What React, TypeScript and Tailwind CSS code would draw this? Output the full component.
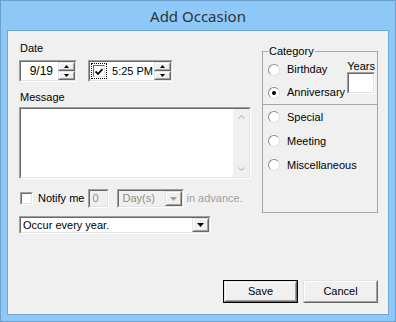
import React from 'react'

const ui = "font-['Liberation_Sans',Arial,sans-serif] text-[11px] leading-[13px] text-black"

function Sunken({ className = '', inner = 'bg-white', children }: { className?: string; inner?: string; children?: React.ReactNode }) {
  return (
    <div className={`shrink-0 border border-t-[#a0a0a0] border-l-[#a0a0a0] border-b-white border-r-white ${className}`}>
      <div className={`w-full h-full border border-t-[#696969] border-l-[#696969] border-b-[#e3e3e3] border-r-[#e3e3e3] flex items-center ${inner}`}>
        {children}
      </div>
    </div>
  )
}

function Raised({ className = '', children }: { className?: string; children?: React.ReactNode }) {
  return (
    <div className={`shrink-0 border border-t-[#e3e3e3] border-l-[#e3e3e3] border-b-[#696969] border-r-[#696969] bg-[#f0f0f0] ${className}`}>
      <div className="w-full h-full border border-t-white border-l-white border-b-[#a0a0a0] border-r-[#a0a0a0] flex items-center justify-center">
        {children}
      </div>
    </div>
  )
}

function Spin() {
  return (
    <div className="flex flex-col w-[17px] h-full">
      <Raised className="flex-1">
        <svg width="5" height="3" viewBox="0 0 5 3"><path d="M2.5 0 L5 3 L0 3 Z" fill="#000" /></svg>
      </Raised>
      <Raised className="flex-1">
        <svg width="5" height="3" viewBox="0 0 5 3"><path d="M0 0 L5 0 L2.5 3 Z" fill="#000" /></svg>
      </Raised>
    </div>
  )
}

function DropArrow({ color = '#000' }: { color?: string }) {
  return (
    <Raised className="w-[17px] h-full">
      <svg width="7" height="4" viewBox="0 0 7 4"><path d="M0 0 L7 0 L3.5 4 Z" fill={color} /></svg>
    </Raised>
  )
}

function Radio({ label, checked = false }: { label: string; checked?: boolean }) {
  return (
    <div className="flex items-center whitespace-nowrap">
      <div className="w-[12px] h-[12px] rounded-full bg-white border border-t-[#8d8d8d] border-l-[#8d8d8d] border-b-[#e0e0e0] border-r-[#e0e0e0] flex items-center justify-center">
        {checked && <div className="w-[4px] h-[4px] rounded-full bg-black" />}
      </div>
      <span className="ml-[7px]">{label}</span>
    </div>
  )
}

export default function App() {
  return (
    <div className={`w-[396px] h-[322px] border border-[#6d9fcc] bg-[#8dc8f7] flex flex-col ${ui}`}>
      <div className="h-[29px] flex items-center justify-center pt-[1px] font-['Noto_Sans',sans-serif] text-[15px] text-[#333333]">
        Add Occasion
      </div>
      <div className="mx-[6px] h-[285px] border border-[#70a6d6] bg-[#f0f0f0] flex flex-col">
        <div className="flex pl-[11px]">
          <div className="flex flex-col w-[232px] shrink-0">
            <div className="mt-[11px] ml-[1px]">Date</div>
            <div className="mt-[5px] flex h-[22px]">
              <Sunken className="w-[58px] h-full">
                <span className="flex-1 text-right pr-[5px] text-[12px]">9/19</span>
                <Spin />
              </Sunken>
              <Sunken className="ml-[11px] w-[85px] h-full">
                <div className="ml-[1px] w-[16px] h-[16px] border border-dotted border-black flex items-center justify-center">
                  <div className="w-[12px] h-[12px] bg-white border border-t-[#696969] border-l-[#696969] border-b-[#e3e3e3] border-r-[#e3e3e3] flex items-center justify-center">
                    <svg width="8" height="7" viewBox="0 0 8 7"><path d="M0.5 3.5 L3 6 L7.5 1" stroke="#000" strokeWidth="1.8" fill="none" /></svg>
                  </div>
                </div>
                <span className="flex-1 text-right pr-[1px] whitespace-nowrap">5:25 PM</span>
                <Spin />
              </Sunken>
            </div>
            <div className="mt-[9px] ml-[1px]">Message</div>
            <Sunken className="mt-[3px] w-[232px] h-[72px]">
              <div className="flex-1 h-full bg-white" />
              <div className="w-[16px] h-full bg-[#f0f0f0] flex flex-col items-center justify-between py-[6px]">
                <svg width="7" height="4" viewBox="0 0 7 4"><path d="M0.5 3.5 L3.5 0.5 L6.5 3.5" stroke="#c4c4c4" strokeWidth="1.2" fill="none" /></svg>
                <svg width="7" height="4" viewBox="0 0 7 4"><path d="M0.5 0.5 L3.5 3.5 L6.5 0.5" stroke="#c4c4c4" strokeWidth="1.2" fill="none" /></svg>
              </div>
            </Sunken>
            <div className="mt-[10px] h-[19px] flex items-center whitespace-nowrap">
              <Sunken className="ml-[1px] w-[13px] h-[13px]" />
              <span className="ml-[5px] shrink-0">Notify me</span>
              <Sunken className="ml-[4px] w-[21px] h-full" inner="bg-[#f0f0f0]">
                <span className="pl-[2px] text-[#8c8c8c]">0</span>
              </Sunken>
              <Sunken className="ml-[8px] w-[67px] h-full" inner="bg-[#f0f0f0]">
                <span className="flex-1 pl-[3px] text-[#8c8c8c]">Day(s)</span>
                <DropArrow color="#a0a0a0" />
              </Sunken>
              <span className="ml-[2px] shrink-0 text-[#a0a0a0]">in advance.</span>
            </div>
            <Sunken className="mt-[8px] w-[192px] h-[18px]">
              <span className="flex-1 pl-[2px]">Occur every year.</span>
              <DropArrow />
            </Sunken>
          </div>

          <div className="relative ml-[11px] mt-[20px] w-[116px] h-[162px] border border-[#a7a7a7]">
            <span className="absolute left-[5px] -top-[7px] px-[1px] bg-[#f0f0f0]">Category</span>
            <div className="flex h-[53px] border-b border-[#a7a7a7]">
              <div className="flex flex-col pl-[5px] pt-[6px]">
                <div className="h-[24px] flex items-center"><Radio label="Birthday" /></div>
                <div className="h-[23px] flex items-center"><Radio label="Anniversary" checked /></div>
              </div>
              <div className="ml-auto pr-[2px] pt-[9px] flex flex-col items-end">
                <span className="leading-[11px]">Years</span>
                <Sunken className="w-[28px] h-[22px]" />
              </div>
            </div>
            <div className="flex flex-col pl-[5px]">
              <div className="h-[24px] flex items-center"><Radio label="Special" /></div>
              <div className="h-[24px] flex items-center"><Radio label="Meeting" /></div>
              <div className="h-[24px] flex items-center"><Radio label="Miscellaneous" /></div>
            </div>
          </div>
        </div>

        <div className="mt-auto flex justify-end gap-[5px] pr-[10px] pb-[11px]">
          <div className="w-[75px] h-[23px] border border-black">
            <Raised className="w-full h-full"><span>Save</span></Raised>
          </div>
          <Raised className="w-[75px] h-[23px]"><span>Cancel</span></Raised>
        </div>
      </div>
    </div>
  )
}
